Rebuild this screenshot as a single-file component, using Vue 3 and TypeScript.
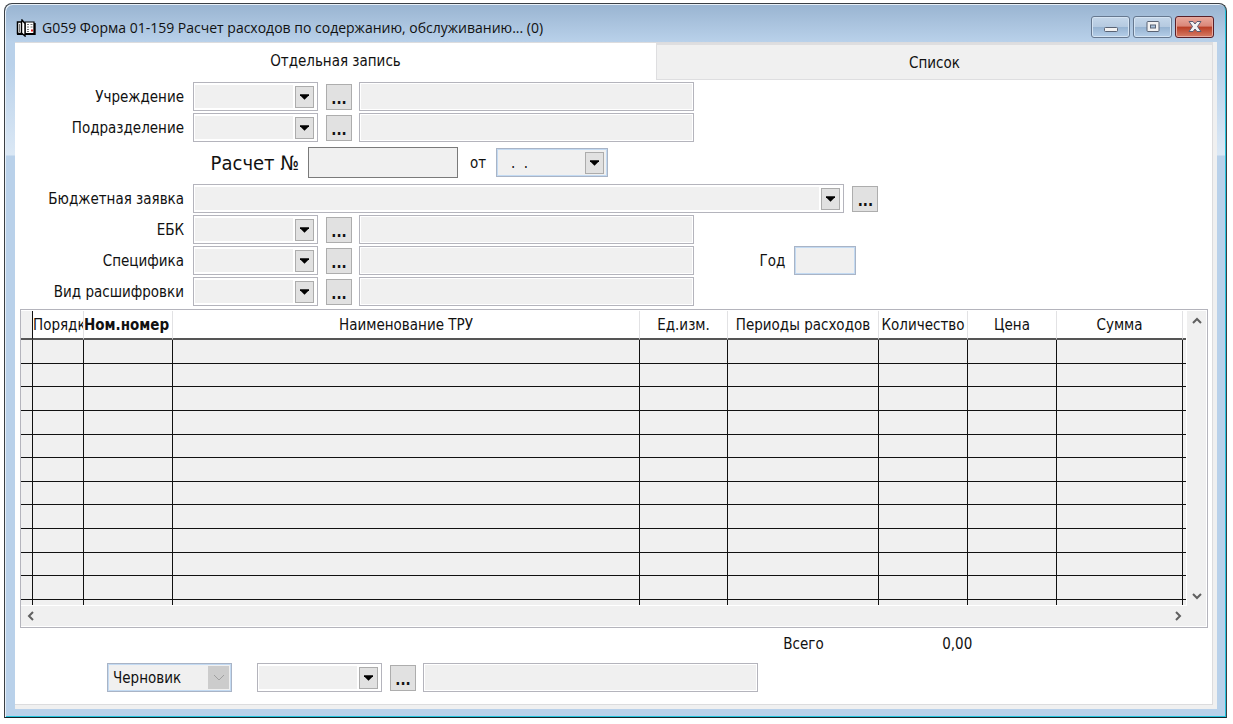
<script setup lang="ts">
import { ref } from 'vue'

interface LookupRow {
  id: string
  label: string
}

interface Column {
  key: string
  title: string
  bold?: boolean
  left?: boolean
}

const title = 'G059 Форма 01-159 Расчет расходов по содержанию, обслуживанию... (0)'

const topRows: LookupRow[] = [
  { id: 'institution', label: 'Учреждение' },
  { id: 'department', label: 'Подразделение' },
]

const classRows: LookupRow[] = [
  { id: 'ebk', label: 'ЕБК' },
  { id: 'specifics', label: 'Специфика' },
  { id: 'kind', label: 'Вид расшифровки' },
]

const columns: Column[] = [
  { key: 'order', title: 'Порядк', left: true },
  { key: 'number', title: 'Ном.номер', bold: true, left: true },
  { key: 'name', title: 'Наименование ТРУ' },
  { key: 'unit', title: 'Ед.изм.' },
  { key: 'periods', title: 'Периоды расходов' },
  { key: 'quantity', title: 'Количество' },
  { key: 'price', title: 'Цена' },
  { key: 'sum', title: 'Сумма' },
]

const rowCount = 11
const activeTab = ref<'record' | 'list'>('record')
const date = ref('.  .')
const status = ref('Черновик')
</script>

<template>
  <div class="desktop">
    <main class="window">
      <header class="titlebar">
        <svg class="app-icon" viewBox="0 0 20 18" aria-hidden="true">
          <path d="M1.500 3h5v11.500h-5z" fill="#fff" stroke="#000" stroke-width="1.5" />
          <path d="M9 3h9v11.500H9z" fill="#fff" stroke="#000" stroke-width="1.2" />
          <path d="M1 15.200h18M18.800 4v12" stroke="#000" stroke-width="1.8" fill="none" />
          <path d="M6 1l3 3.500V17L5.500 14V4z" fill="#fff" stroke="#000" stroke-width="1.4" />
          <path d="M11 5.500h2M14.500 5.500h2M11 8h2M14.500 8h2M11 10.500h2M11 12.500h2M3.500 5v8" stroke="#777" />
          <path d="M15 11.500h2" stroke="#e02020" stroke-width="2" />
        </svg>
        <h1>{{ title }}</h1>
        <div class="window-buttons">
          <button type="button" aria-label="Свернуть">
            <svg viewBox="0 0 16 14"><rect x="1.500" y="7.500" width="13" height="4" rx="1" fill="#f2f2f2" stroke="#596374" /></svg>
          </button>
          <button type="button" aria-label="Развернуть">
            <svg viewBox="0 0 16 14">
              <rect x="2" y="1.500" width="12" height="10" rx="1" fill="#f2f2f2" stroke="#596374" />
              <rect x="5.500" y="5" width="5" height="3" fill="#a9c2dc" stroke="#596374" />
            </svg>
          </button>
          <button type="button" class="close" aria-label="Закрыть">
            <svg viewBox="0 0 16 14">
              <path d="M2 1.500h4l2 2.500 2-2.500h4L10.500 6.500l3.500 5h-4L8 9l-2 2.500H2l3.500-5z" fill="#f2f2f2" stroke="#5b5b70" />
            </svg>
          </button>
        </div>
      </header>

      <section class="client">
        <div class="page">
          <div class="tabs" role="tablist">
            <button
              type="button" role="tab" class="tab"
              :aria-selected="activeTab === 'record'" @click="activeTab = 'record'"
            >Отдельная запись</button>
            <button
              type="button" role="tab" class="tab second"
              :aria-selected="activeTab === 'list'" @click="activeTab = 'list'"
            >Список</button>
          </div>

          <form class="form" @submit.prevent>
            <div v-for="row in topRows" :key="row.id" class="row">
              <label class="caption" :for="row.id">{{ row.label }}</label>
              <span class="combo">
                <select :id="row.id"><option></option></select>
                <span class="drop"><svg viewBox="0 0 10 6"><path d="M0 0h10v1L5 6 0 1z" /></svg></span>
              </span>
              <button type="button" class="more" :aria-label="`Выбрать: ${row.label}`">...</button>
              <input class="field" type="text" readonly :aria-label="row.label">
              <span class="rest"></span>
            </div>

            <div class="row calc">
              <label class="caption large" for="calc-number">Расчет №</label>
              <input id="calc-number" class="calc-number" type="text">
              <label class="from" for="calc-date">от</label>
              <span class="combo date">
                <input id="calc-date" v-model="date" type="text">
                <span class="drop"><svg viewBox="0 0 10 6"><path d="M0 0h10v1L5 6 0 1z" /></svg></span>
              </span>
            </div>

            <div class="row">
              <label class="caption" for="request">Бюджетная заявка</label>
              <span class="combo wide">
                <select id="request"><option></option></select>
                <span class="drop"><svg viewBox="0 0 10 6"><path d="M0 0h10v1L5 6 0 1z" /></svg></span>
              </span>
              <button type="button" class="more" aria-label="Выбрать заявку">...</button>
              <span class="rest-wide"></span>
            </div>

            <div v-for="row in classRows" :key="row.id" class="row">
              <label class="caption" :for="row.id">{{ row.label }}</label>
              <span class="combo">
                <select :id="row.id"><option></option></select>
                <span class="drop"><svg viewBox="0 0 10 6"><path d="M0 0h10v1L5 6 0 1z" /></svg></span>
              </span>
              <button type="button" class="more" :aria-label="`Выбрать: ${row.label}`">...</button>
              <input class="field" type="text" readonly :aria-label="row.label">
              <span class="rest">
                <template v-if="row.id === 'specifics'">
                  <label class="year-label" for="year">Год</label>
                  <input id="year" class="year" type="text">
                </template>
              </span>
            </div>
          </form>

          <div class="grid">
            <div class="grid-body">
              <table>
                <colgroup>
                  <col class="c-mark">
                  <col v-for="c in columns" :key="c.key" :class="`c-${c.key}`">
                  <col class="c-tail">
                </colgroup>
                <thead>
                  <tr>
                    <th class="mark"></th>
                    <th v-for="c in columns" :key="c.key" scope="col" :class="{ bold: c.bold, left: c.left }">{{ c.title }}</th>
                    <th class="tail"></th>
                  </tr>
                </thead>
                <tbody>
                  <tr v-for="n in rowCount" :key="n">
                    <td></td>
                    <td v-for="c in columns" :key="c.key"></td>
                    <td class="tail"></td>
                  </tr>
                  <tr class="partial">
                    <td></td>
                    <td v-for="c in columns" :key="c.key"></td>
                    <td class="tail"></td>
                  </tr>
                </tbody>
              </table>
            </div>
            <div class="vscroll">
              <button type="button" aria-label="Вверх"><svg viewBox="0 0 10 10"><path d="M1 7l4-4 4 4" /></svg></button>
              <button type="button" aria-label="Вниз"><svg viewBox="0 0 10 10"><path d="M1 3l4 4 4-4" /></svg></button>
            </div>
            <div class="hscroll">
              <button type="button" aria-label="Влево"><svg viewBox="0 0 10 10"><path d="M7 1L3 5l4 4" /></svg></button>
              <button type="button" aria-label="Вправо"><svg viewBox="0 0 10 10"><path d="M3 1l4 4-4 4" /></svg></button>
            </div>
            <div class="corner"></div>
          </div>

          <div class="totals">
            <span></span>
            <span>Всего</span>
            <output>0,00</output>
          </div>

          <div class="row bottom">
            <span class="combo status">
              <select v-model="status" aria-label="Статус"><option>Черновик</option></select>
              <span class="drop"><svg viewBox="0 0 12 8"><path d="M1 1l5 5 5-5" /></svg></span>
            </span>
            <span class="combo">
              <select aria-label="Исполнитель"><option></option></select>
              <span class="drop"><svg viewBox="0 0 10 6"><path d="M0 0h10v1L5 6 0 1z" /></svg></span>
            </span>
            <button type="button" class="more" aria-label="Выбрать исполнителя">...</button>
            <input class="field" type="text" readonly aria-label="Исполнитель">
            <span class="rest-bottom"></span>
          </div>
        </div>
      </section>
    </main>
  </div>
</template>

<style>
body {
  background: #fff;
}
</style>

<style scoped>
* {
  box-sizing: border-box;
}

.desktop {
  display: flex;
  height: 100vh;
  min-height: 560px;
  padding: 3px 6px 6px 4px;
  font-family: "DejaVu Sans Condensed", "DejaVu Sans", sans-serif;
  font-stretch: condensed;
  font-size: 15px;
  line-height: 18px;
  color: #111;
}

button,
input,
select {
  margin: 0;
  padding: 0;
  border: 0;
  border-radius: 0;
  font: inherit;
  color: inherit;
  outline: none;
}

.window {
  flex: 1;
  min-width: 0;
  display: flex;
  flex-direction: column;
  border: 1px solid #3a3f44;
  border-bottom-color: #10252c;
  border-radius: 8px 8px 0 0;
  padding: 0 9px 8px 10px;
  background: linear-gradient(#99b4d1 0, #b9d1ea 38px, #b9d1ea 60px, #dbe8f5 151px, #b9d1ea 152px);
  box-shadow: inset 1px 1px 0 #e8f0f8, inset -1px -1px 0 #23c3dc;
}

.titlebar {
  display: flex;
  align-items: center;
  height: 38px;
  padding-top: 10px;
}

.app-icon {
  width: 20px;
  height: 18px;
  margin: 0 6px 0 1px;
}

h1 {
  flex: 1;
  margin: 0;
  font-family: "Open Sans", "Noto Sans", sans-serif;
  font-stretch: normal;
  font-size: 14px;
  line-height: 20px;
  font-weight: 400;
  white-space: nowrap;
}

.window-buttons {
  display: flex;
  gap: 3px;
  margin: 0 3px 2px 0;
}

.window-buttons button {
  display: flex;
  justify-content: center;
  align-items: center;
  width: 39px;
  height: 22px;
  border: 1px solid #66788f;
  border-radius: 3px;
  background: linear-gradient(#c5d7ea 0, #b5cae0 48%, #96b3d1 50%, #b5cee8 100%);
  box-shadow: inset 0 0 0 1px #d5e4f3;
}

.window-buttons svg {
  width: 16px;
  height: 14px;
}

.window-buttons .close {
  border-color: #5a1f28;
  background: linear-gradient(#e9a99d 0, #da8678 46%, #b93d25 50%, #d67c66 100%);
  box-shadow: inset 0 0 0 1px #e6aaa0;
}

.client {
  flex: 1;
  min-height: 0;
  display: flex;
  padding: 0 4px 4px 0;
  background: #f0f0f0;
}

.page {
  flex: 1;
  min-width: 0;
  display: flex;
  flex-direction: column;
  border: 1px solid #dcdcde;
  border-left: 0;
  background: #fff;
}

.tabs {
  display: flex;
  height: 37px;
}

.tab {
  flex: 642;
  padding-bottom: 2px;
  background: #fff;
}

.tab.second {
  flex: 556;
  margin: 0;
  padding: 2px 0 0;
  background: #f0f0f0;
  border: solid #dedee0;
  border-width: 2px 0 1px 1px;
}

.form {
  display: flex;
  flex-direction: column;
  gap: 2px;
  padding: 2px 0 3px;
}

.row {
  display: flex;
  align-items: center;
  height: 29px;
}

.caption {
  width: 178px;
  padding-right: 9px;
  text-align: right;
  white-space: nowrap;
}

.combo {
  display: grid;
  width: 125px;
  height: 29px;
  border: 1px solid #b4b4bc;
  background: #fff;
}

.combo select,
.combo input {
  grid-area: 1 / 1;
  width: 100%;
  min-width: 0;
  height: 27px;
  padding: 2px 24px 2px 1px;
  appearance: none;
  background: #f0f0f0 content-box;
}

.drop {
  grid-area: 1 / 1;
  place-self: center end;
  display: flex;
  justify-content: center;
  align-items: center;
  width: 19px;
  height: 22px;
  margin-right: 3px;
  border: 1px solid #acacac;
  background: #e1e1e1;
  pointer-events: none;
}

.drop svg {
  width: 9px;
  height: 6px;
}

.more {
  width: 26px;
  height: 26px;
  margin: 0 7px 0 8px;
  padding-top: 4px;
  border: 1px solid #adadad;
  background: #e1e1e1;
  font-weight: 700;
  line-height: 18px;
}

.field {
  flex: 333;
  min-width: 0;
  height: 29px;
  border: 1px solid #b4b4bc;
  padding: 1px;
  background: #f0f0f0 content-box;
}

.rest {
  flex: 520;
  display: flex;
  align-items: center;
}

.calc {
  height: 31px;
  margin: 3px 0 4px;
}

.large {
  width: 293px;
  font-size: 20px;
  line-height: 24px;
}

.calc-number {
  width: 150px;
  height: 31px;
  border: 1px solid #7a7a7a;
  background: #f0f0f0;
}

.from {
  width: 38px;
  padding-left: 12px;
}

.date {
  width: 112px;
  border-color: #a9b4c6;
  box-shadow: inset 0 0 0 1px #c3daf2;
}

.combo.date input {
  padding: 0 0 0 13px;
  margin: 1px;
  width: auto;
  height: 25px;
  background: #f0f0f0;
}

.wide {
  flex: 652;
}

.rest-wide {
  flex: 328;
}

.year-label {
  width: 100px;
  padding-right: 9px;
  text-align: right;
}

.year {
  width: 62px;
  height: 29px;
  border: 1px solid #a9b4c6;
  background: #f0f0f0;
  box-shadow: inset 0 0 0 1px #c3daf2;
}

.grid {
  flex: 1;
  min-height: 0;
  display: grid;
  grid-template: minmax(0, 1fr) 20px / minmax(0, 1fr) 19px;
  margin: 0 4px 0 5px;
  border: 1px solid #b4b4bc;
  padding: 1px 1px 1px 0;
  background: #fff;
}

.grid-body {
  min-height: 0;
  padding: 0 1px 1px 0;
}

table {
  width: 100%;
  height: 100%;
  table-layout: fixed;
  border-collapse: separate;
  border-spacing: 0;
}

.c-mark { width: 12px; }
.c-order { width: 51px; }
.c-number { width: 89px; }
.c-unit { width: 88px; }
.c-periods { width: 151px; }
.c-quantity { width: 89px; }
.c-price { width: 89px; }
.c-sum { width: 126px; }
.c-tail { width: 3px; }

th {
  height: 29px;
  padding: 0;
  overflow: hidden;
  border-right: 1px solid #e2e2e4;
  border-bottom: 2px solid #555;
  background: #fff;
  font-weight: 400;
  text-align: center;
  white-space: nowrap;
}

th.left {
  text-align: left;
}

th.bold {
  font-weight: 700;
}

th.mark {
  border-right: 1px solid #111;
  background: #f0f0f0;
}

td {
  padding: 0;
  border-right: 1px solid #111;
  border-bottom: 1px solid #111;
  background: #f0f0f0;
}

td.tail,
th.tail {
  border-right: 0;
}

.partial td {
  height: 5px;
  border-bottom: 0;
}

.vscroll,
.hscroll {
  display: flex;
  justify-content: space-between;
  background: #f0f0f0;
}

.vscroll {
  flex-direction: column;
}

.vscroll button,
.hscroll button {
  display: flex;
  justify-content: center;
  align-items: center;
  width: 19px;
  height: 20px;
  background: none;
}

.vscroll svg,
.hscroll svg {
  width: 10px;
  height: 10px;
  fill: none;
  stroke: #606060;
  stroke-width: 2;
}

.corner {
  background: #f0f0f0;
}

.totals {
  display: grid;
  grid-template-columns: 769fr 159fr 270fr;
  align-items: center;
  height: 32px;
  margin-bottom: 3px;
}

.bottom {
  margin-bottom: 12px;
  padding-left: 92px;
}

.status {
  width: 125px;
  margin-right: 25px;
  border-color: #a9b4c6;
  background: #f0f0f0;
  box-shadow: inset 0 0 0 1px #c3daf2;
}

.combo.status select {
  padding: 0 24px 0 5px;
  background: none;
}

.status .drop {
  width: 21px;
  height: 23px;
  margin-right: 2px;
  border: 0;
  background: #ccc;
}

.status .drop svg {
  width: 12px;
  height: 8px;
  fill: none;
  stroke: #a0a0a0;
}

.rest-bottom {
  flex: 456;
}
</style>
